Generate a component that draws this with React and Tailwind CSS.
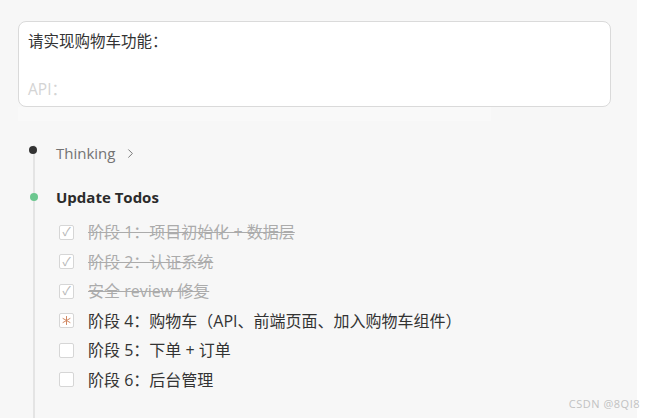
import { ChevronRight } from 'lucide-react';

const todos = [
  { text: '阶段 1：项目初始化 + 数据层', status: 'done' },
  { text: '阶段 2：认证系统', status: 'done' },
  { text: '安全 review 修复', status: 'done' },
  { text: '阶段 4：购物车（API、前端页面、加入购物车组件）', status: 'active' },
  { text: '阶段 5：下单 + 订单', status: 'todo' },
  { text: '阶段 6：后台管理', status: 'todo' },
];

function TodoBox({ status }) {
  return (
    <span className="w-[15px] h-[15px] shrink-0 rounded-[2px] border border-[#d6d6d6] bg-white flex items-center justify-center leading-none">
      {status === 'done' && <span className="text-[12px] text-[#b5b5b5]">✓</span>}
      {status === 'active' && (
        <svg width="9" height="9" viewBox="0 0 10 10" stroke="#cf8660" strokeWidth="1.1" strokeLinecap="round">
          <line x1="5" y1="0.5" x2="5" y2="9.5" />
          <line x1="1.1" y1="2.75" x2="8.9" y2="7.25" />
          <line x1="1.1" y1="7.25" x2="8.9" y2="2.75" />
        </svg>
      )}
    </span>
  );
}

export default function App() {
  return (
    <div
      className="w-[652px] h-[418px] bg-white flex overflow-hidden relative"
      style={{ fontFamily: '"Open Sans", "Noto Sans CJK SC", sans-serif' }}
    >
      <div className="w-[637px] h-full bg-[#f7f7f7] flex flex-col">
        {/* prompt box */}
        <div className="pl-[18px] pr-[26px] pt-[21px]">
          <div className="h-[86px] rounded-[8px] border border-[#dadada] bg-white px-[9px] pt-[8px] text-[15.5px] leading-[22px]">
            <div className="text-[#333]">请实现购物车功能：</div>
            <div className="mt-[26px] text-[#d4d4d4]">API：</div>
          </div>
          <div className="h-[14px] mr-[120px] bg-[#f9f9f9]" />
        </div>

        {/* timeline */}
        <div className="relative flex-1 pl-[56px] pt-[21px]">
          <div className="absolute left-[33px] top-[24px] bottom-0 w-[2px] bg-[#e4e4e4]" />

          <div className="relative flex items-center h-[22px] text-[15px] text-[#737373]">
            <span className="absolute left-[-27px] w-[8px] h-[8px] rounded-full bg-[#333] -mt-[6px]" />
            <span>Thinking</span>
            <ChevronRight className="ml-[8px] w-[15px] h-[15px] text-[#666]" strokeWidth={1.4} />
          </div>

          <div className="relative flex items-center h-[22px] mt-[22px] text-[15px] font-bold text-[#2b2b2b]">
            <span className="absolute left-[-26px] w-[8px] h-[8px] rounded-full bg-[#6cc78f]" />
            Update Todos
          </div>

          <div className="mt-[13px] flex flex-col gap-[7.5px] pl-[3px]">
            {todos.map((t) => (
              <div key={t.text} className="flex items-center h-[22px] gap-[14px]">
                <TodoBox status={t.status} />
                <span
                  className={`text-[16px] ${
                    t.status === 'done' ? 'text-[#ababab] line-through' : 'text-[#333]'
                  }`}
                >
                  {t.text}
                </span>
              </div>
            ))}
          </div>
        </div>
      </div>

      <div className="absolute right-[12px] bottom-[6px] text-[11px] text-[#c2c2c2] tracking-[0.5px]">
        CSDN @8QI8
      </div>
    </div>
  );
}
